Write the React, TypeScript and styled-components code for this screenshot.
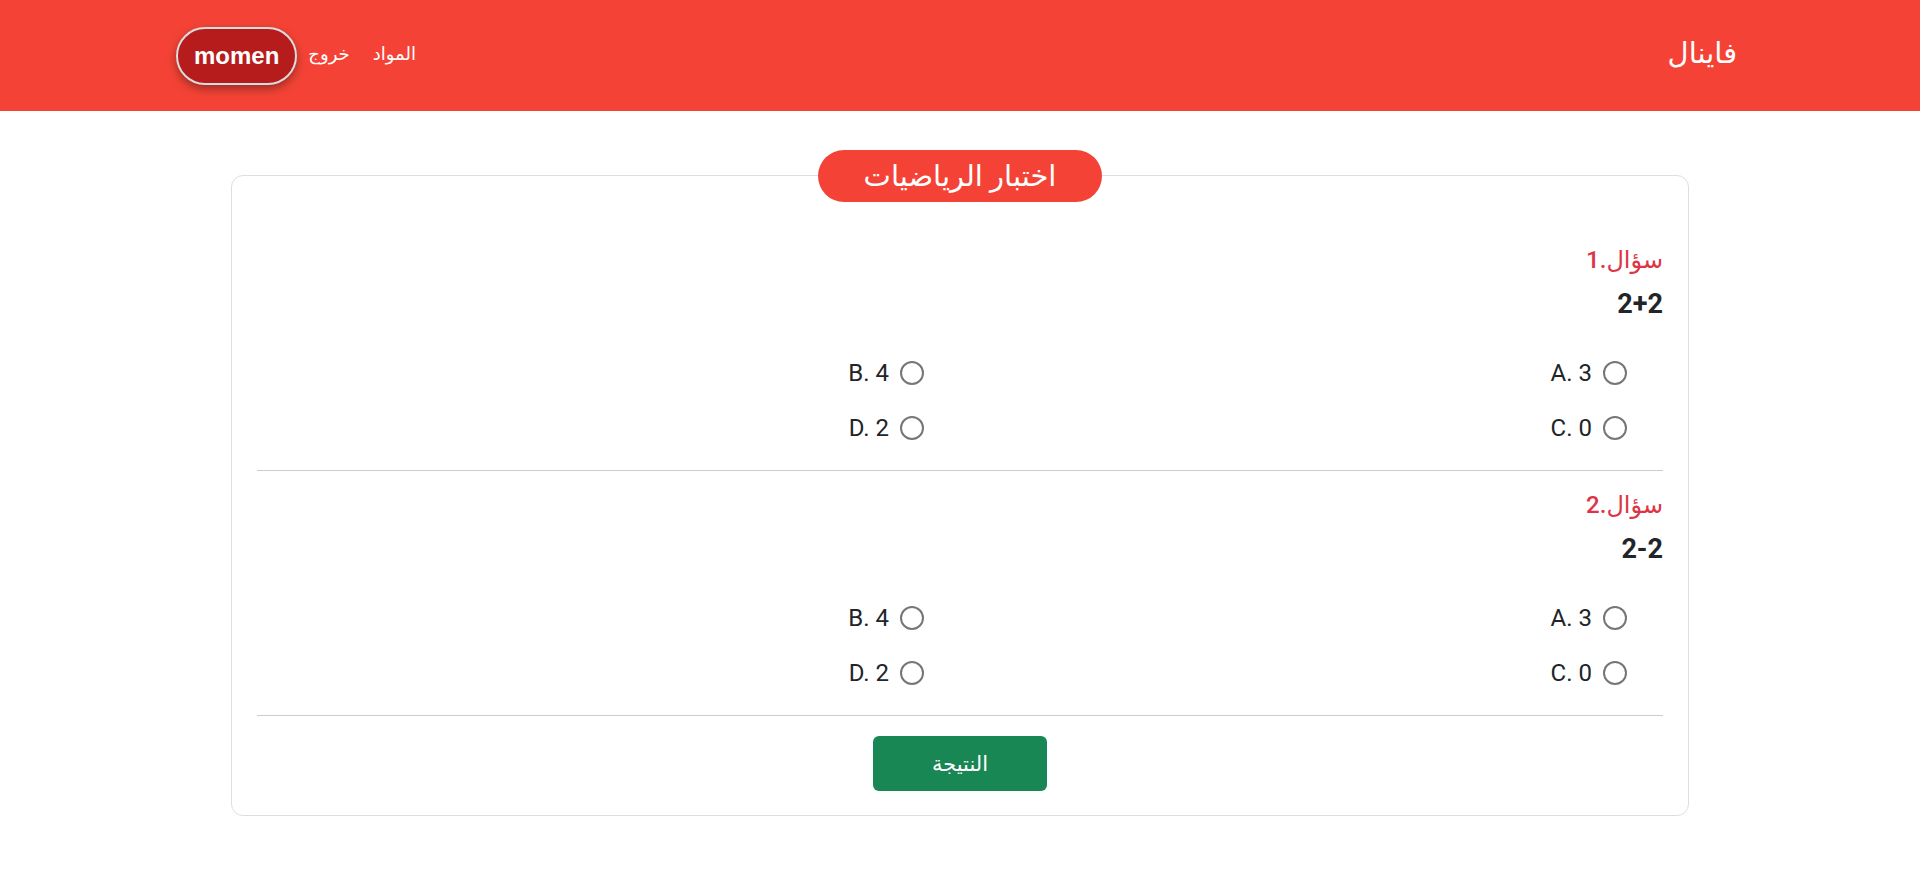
import React from "react";
import styled, { createGlobalStyle } from "styled-components";

const GlobalStyle = createGlobalStyle`
  html, body {
    margin: 0;
    padding: 0;
    background: #ffffff;
  }
  body {
    font-family: Roboto, "DejaVu Sans", sans-serif;
    color: #212529;
  }
  * { box-sizing: border-box; }
`;

const Page = styled.div`
  direction: rtl;
  min-height: 894px;
`;

const Header = styled.header`
  height: 111px;
  background: #f44336;
  display: flex;
  align-items: center;
  justify-content: space-between;
  padding: 0 183px 0 176px;
`;

const Brand = styled.a`
  color: #ffffff;
  font-size: 29px;
  text-decoration: none;
  line-height: 1;
  padding-bottom: 4px;
`;

const Nav = styled.nav`
  display: flex;
  align-items: center;
  gap: 11px;
`;

const NavLinks = styled.div`
  display: flex;
  align-items: center;
  gap: 23px;
  padding-bottom: 4px;
`;

const NavLink = styled.a`
  color: #ffffff;
  font-size: 18px;
  text-decoration: none;
`;

const UserPill = styled.span`
  display: inline-flex;
  align-items: center;
  justify-content: center;
  height: 58px;
  padding: 0 16px;
  border: 2px solid #dcdcdc;
  border-radius: 29px;
  background: #b71c1c;
  color: #ffffff;
  font-family: "Liberation Sans", Arial, sans-serif;
  font-weight: 700;
  font-size: 24px;
  box-shadow: 0 4px 10px rgba(0, 0, 0, 0.35);
`;

const Card = styled.section`
  position: relative;
  width: 1458px;
  margin: 64px auto 0;
  border: 1px solid #dedede;
  border-radius: 12px;
  padding: 50px 25px 24px;
`;

const CardTitle = styled.h2`
  position: absolute;
  top: 0;
  left: 50%;
  transform: translate(-50%, -50%);
  margin: 0;
  height: 52px;
  width: 284px;
  border-radius: 26px;
  background: #f44336;
  color: #ffffff;
  font-weight: 400;
  font-size: 29px;
  display: flex;
  align-items: center;
  justify-content: center;
  white-space: nowrap;
`;

const QuestionBlock = styled.div`
  padding: 16px 0 22px;
  border-bottom: 1px solid #cccccc;
`;

const QuestionLabel = styled.h5`
  margin: 0;
  font-size: 24px;
  line-height: 36px;
  font-weight: 500;
  color: #dc3545;
`;

const QuestionText = styled.h3`
  margin: 6px 0 0;
  font-size: 27px;
  line-height: 40px;
  font-weight: 700;
  color: #212529;
`;

const Options = styled.div`
  display: grid;
  grid-template-columns: 1fr 1fr;
  row-gap: 15px;
  margin-top: 29px;
`;

const Option = styled.label`
  display: flex;
  align-items: center;
  gap: 11px;
  height: 40px;
  padding-inline-start: 36px;
  font-size: 24px;
  color: #212529;
  cursor: pointer;
`;

const Radio = styled.input.attrs({ type: "radio" })`
  appearance: none;
  margin: 0;
  width: 24px;
  height: 24px;
  border: 2px solid #767676;
  border-radius: 50%;
  background: #ffffff;
  flex-shrink: 0;
  &:checked {
    background: radial-gradient(circle, #767676 0 5px, #ffffff 6px);
  }
`;

const OptionText = styled.span`
  direction: ltr;
  unicode-bidi: isolate;
`;

const Actions = styled.div`
  display: flex;
  justify-content: center;
  padding-top: 20px;
`;

const ResultButton = styled.button`
  width: 174px;
  height: 55px;
  border: none;
  border-radius: 6px;
  background: #198754;
  color: #ffffff;
  font-family: Roboto, "DejaVu Sans", sans-serif;
  font-size: 21px;
  cursor: pointer;
`;

const questions = [
  { n: 1, text: "2+2", options: ["A. 3", "B. 4", "C. 0", "D. 2"] },
  { n: 2, text: "2-2", options: ["A. 3", "B. 4", "C. 0", "D. 2"] },
];

export default function App() {
  return (
    <Page>
      <GlobalStyle />
      <Header>
        <Brand href="#">فاينال</Brand>
        <Nav>
          <NavLinks>
            <NavLink href="#">المواد</NavLink>
            <NavLink href="#">خروج</NavLink>
          </NavLinks>
          <UserPill>momen</UserPill>
        </Nav>
      </Header>
      <Card>
        <CardTitle>اختبار الرياضيات</CardTitle>
        {questions.map((q) => (
          <QuestionBlock key={q.n}>
            <QuestionLabel>سؤال.{q.n}</QuestionLabel>
            <QuestionText>{q.text}</QuestionText>
            <Options>
              {q.options.map((o) => (
                <Option key={o}>
                  <Radio name={`q${q.n}`} />
                  <OptionText>{o}</OptionText>
                </Option>
              ))}
            </Options>
          </QuestionBlock>
        ))}
        <Actions>
          <ResultButton>النتيجة</ResultButton>
        </Actions>
      </Card>
    </Page>
  );
}
